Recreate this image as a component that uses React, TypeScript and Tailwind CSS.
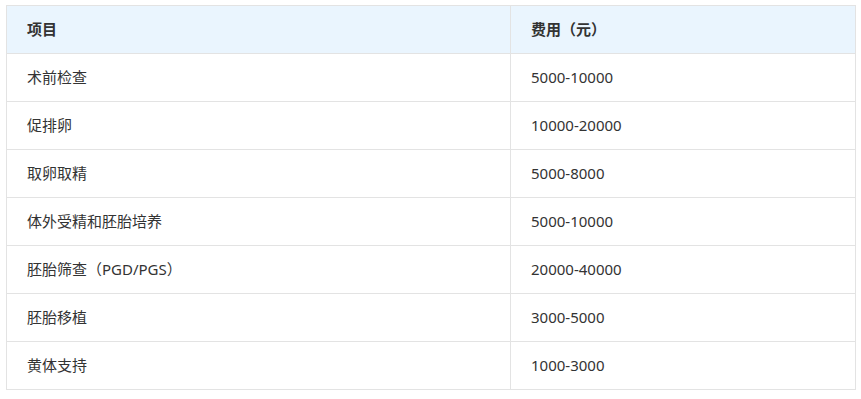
import React from 'react';

interface Row {
    item: string;
    cost: string;
}

const rows: Row[] = [
    { item: '术前检查', cost: '5000-10000' },
    { item: '促排卵', cost: '10000-20000' },
    { item: '取卵取精', cost: '5000-8000' },
    { item: '体外受精和胚胎培养', cost: '5000-10000' },
    { item: '胚胎筛查（PGD/PGS）', cost: '20000-40000' },
    { item: '胚胎移植', cost: '3000-5000' },
    { item: '黄体支持', cost: '1000-3000' },
];

const App: React.FC = () => {
    return (
        <div className="w-[861px] h-[399px] bg-white pt-[5px] pl-[6px] font-['Noto_Sans','Noto_Sans_CJK_SC',sans-serif] text-[15px] text-[#333]">
            <table className="w-[850px] border-collapse border border-[#e3e3e3]">
                <thead>
                    <tr className="h-[48px] bg-[#eaf5fe]">
                        <th className="w-[504px] border border-[#e3e3e3] px-5 text-left font-bold">项目</th>
                        <th className="border border-[#e3e3e3] px-5 text-left font-bold">费用（元）</th>
                    </tr>
                </thead>
                <tbody>
                    {rows.map((row, idx) => (
                        <tr key={idx} className="h-[48px]">
                            <td className="border border-[#e3e3e3] px-5">{row.item}</td>
                            <td className="border border-[#e3e3e3] px-5">{row.cost}</td>
                        </tr>
                    ))}
                </tbody>
            </table>
        </div>
    );
};

export default App;
